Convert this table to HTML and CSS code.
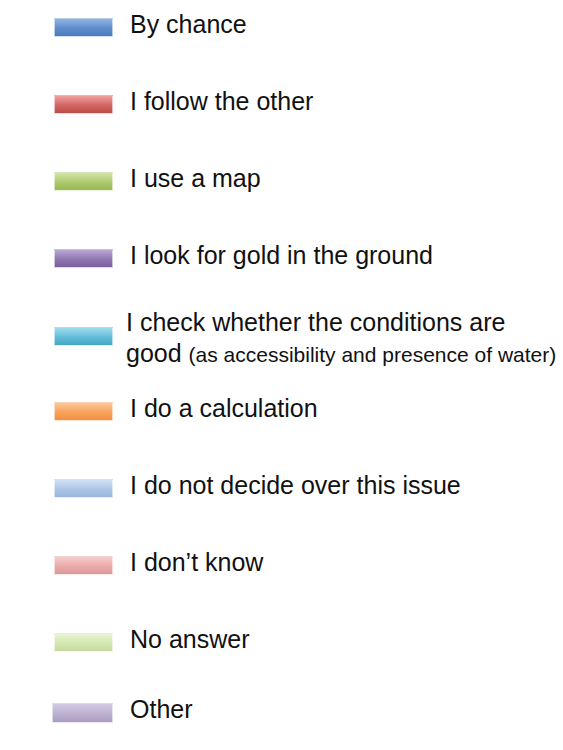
FILE: index.html
```html
<!DOCTYPE html>
<html lang="en">
<head>
<meta charset="utf-8">
<title>Legend</title>
<link rel="stylesheet" href="styles.css">
</head>
<body>
<ul class="legend">
  <li class="item"><span class="swatch c1"></span><span class="label">By chance</span></li>
  <li class="item"><span class="swatch c2"></span><span class="label">I follow the other</span></li>
  <li class="item"><span class="swatch c3"></span><span class="label">I use a map</span></li>
  <li class="item"><span class="swatch c4"></span><span class="label">I look for gold in the ground</span></li>
  <li class="item item-wide"><span class="swatch c5"></span><span class="label label-wide">I check whether the conditions are<br>good <small class="note">(as accessibility and presence of water)</small></span></li>
  <li class="item"><span class="swatch c6"></span><span class="label">I do a calculation</span></li>
  <li class="item"><span class="swatch c7"></span><span class="label">I do not decide over this issue</span></li>
  <li class="item"><span class="swatch c8"></span><span class="label">I don’t know</span></li>
  <li class="item"><span class="swatch c9"></span><span class="label">No answer</span></li>
  <li class="item item-last"><span class="swatch c10"></span><span class="label">Other</span></li>
</ul>
</body>
</html>
```
FILE: styles.css
```css
html, body {
  margin: 0;
  padding: 0;
  background: #ffffff;
}

body {
  font-family: "Liberation Sans", Arial, sans-serif;
  color: #111111;
  width: 563px;
  height: 750px;
  overflow: hidden;
}

.legend {
  list-style: none;
  margin: 0;
  padding: 9px 0 0 54px;
  display: flex;
  flex-direction: column;
  gap: 47px;
}

.item {
  display: flex;
  align-items: center;
  gap: 16px;
  height: 30px;
}

.item-wide {
  height: 62px;
  margin-top: -10px;
  margin-bottom: -23px;
}

.item-last {
  margin-top: -7px;
}

.swatch {
  flex: none;
  width: 59px;
  height: 19px;
  margin-top: 7px;
  box-sizing: border-box;
  border: 1px solid rgba(255, 255, 255, 0.6);
}

.item-wide .swatch {
  margin-top: 0;
  margin-bottom: 4px;
}

.item-last .swatch {
  width: 61px;
  height: 20px;
  margin-left: -2px;
}

.label {
  font-size: 25px;
  line-height: 30px;
  white-space: nowrap;
  margin-left: 1px;
}

.label-wide {
  line-height: 31px;
  margin-left: -3px;
}

.note {
  font-size: 21px;
}

.c1  { background: linear-gradient(#8fb4e3, #5d8cc9 55%, #4a7cbb); }
.c2  { background: linear-gradient(#efa09e, #d46562 55%, #bd4c49); }
.c3  { background: linear-gradient(#d3e6a9, #adc96d 55%, #97b656); }
.c4  { background: linear-gradient(#b8a6d3, #8f76b0 55%, #7b5f9e); }
.c5  { background: linear-gradient(#9fdcee, #62bcd7 55%, #47a7c2); }
.c6  { background: linear-gradient(#fdc79a, #f9a15b 55%, #f39043); }
.c7  { background: linear-gradient(#d0e0f4, #aac5e6 55%, #97b4d9); }
.c8  { background: linear-gradient(#f8cccb, #e9abaa 55%, #dc9998); }
.c9  { background: linear-gradient(#e8f3d3, #d4e7b2 55%, #c5d99f); }
.c10 { background: linear-gradient(#d4cae2, #bcb0d0 55%, #ab9ec3); }
```
